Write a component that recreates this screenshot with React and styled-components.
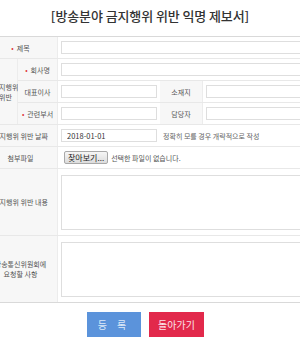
import React from 'react'
import styled, { createGlobalStyle } from 'styled-components'

const Global = createGlobalStyle`
    html, body {
        margin: 0;
        padding: 0;
        background: #ffffff;
    }
`

const Sheet = styled.div`
    width: 300px;
    height: 350px;
    overflow: hidden;
    background: #ffffff;
    font-family: "Noto Sans CJK KR", "Noto Sans", sans-serif;
    color: #444;
`
const Title = styled.h1`
    margin: 0;
    height: 36px;
    padding-top: 8px;
    box-sizing: border-box;
    text-align: center;
    font-size: 13px;
    line-height: 16px;
    font-weight: 500;
    letter-spacing: -0.1px;
    color: #333;
`
const Table = styled.div`
    margin-left: -16px;
    width: 345px;
    border-top: 1px solid #d9d9d9;
    border-bottom: 1px solid #d9d9d9;
`
const Row = styled.div`
    display: grid;
    grid-template-columns: ${(props) => props.cols || '74px 1fr'};
    border-bottom: 1px solid #e8e8e8;
    &:last-child {
        border-bottom: none;
    }
`
const Group = styled.div`
    display: grid;
    grid-template-columns: 34px 1fr;
    border-bottom: 1px solid #e8e8e8;
`
const GroupRows = styled.div`
    display: flex;
    flex-direction: column;
`
const Label = styled.div`
    background: #f7f7f7;
    border-right: 1px solid #ececec;
    padding-left: ${(props) => props.shift || '0'};
    display: flex;
    align-items: center;
    justify-content: center;
    text-align: center;
    font-size: 7px;
    line-height: 10px;
    color: #555;
    white-space: nowrap;
`
const Required = styled.span`
    color: #e0383e;
    margin-right: 3px;
`
const Cell = styled.div`
    padding: ${(props) => (props.tall ? '6px 3px 5px' : '4px 3px')};
    display: flex;
    align-items: center;
    gap: 6px;
    min-width: 0;
`
const Input = styled.input`
    width: ${(props) => props.w || '100%'};
    height: 13px;
    box-sizing: border-box;
    border: 1px solid #dedede;
    padding: 0 5px;
    font-family: inherit;
    font-size: 7.5px;
    color: #333;
    background: #fff;
    outline: none;
`
const TextArea = styled.textarea`
    width: 100%;
    height: 55px;
    box-sizing: border-box;
    border: 1px solid #dedede;
    resize: none;
    outline: none;
`
const Hint = styled.span`
    font-size: 7px;
    color: #666;
    white-space: nowrap;
`
const FileButton = styled.span`
    margin-left: 3px;
    height: 13px;
    padding: 0 3px;
    box-sizing: border-box;
    display: inline-flex;
    align-items: center;
    border: 1px solid #a9a9a9;
    border-radius: 2px;
    background: linear-gradient(#f6f6f6, #dcdcdc);
    font-size: 8px;
    color: #222;
    white-space: nowrap;
`
const FileText = styled.span`
    margin-left: -3px;
    font-size: 7px;
    color: #555;
    white-space: nowrap;
`
const ButtonBar = styled.div`
    display: flex;
    justify-content: center;
    gap: 8px;
    padding: 9px 9px 0 0;
`
const Button = styled.button`
    width: ${(props) => props.w};
    height: 25px;
    border: none;
    background: ${(props) => props.bg};
    color: ${(props) => props.fg};
    font-family: inherit;
    font-size: 10px;
    letter-spacing: ${(props) => props.spacing || '0'};
    cursor: pointer;
`

const App = () => {
    return (
        <Sheet>
            <Global />
            <Title>[방송분야 금지행위 위반 익명 제보서]</Title>
            <Table>
                <Row>
                    <Label><Required>•</Required>제목</Label>
                    <Cell><Input /></Cell>
                </Row>
                <Group>
                    <Label shift="10px">금지행위<br />위반</Label>
                    <GroupRows>
                        <Row cols="40px 1fr">
                            <Label><Required>•</Required>회사명</Label>
                            <Cell><Input /></Cell>
                        </Row>
                        <Row cols="40px 102px 43px 1fr">
                            <Label>대표이사</Label>
                            <Cell><Input /></Cell>
                            <Label>소재지</Label>
                            <Cell><Input /></Cell>
                        </Row>
                        <Row cols="40px 102px 43px 1fr">
                            <Label><Required>•</Required>관련부서</Label>
                            <Cell><Input /></Cell>
                            <Label>담당자</Label>
                            <Cell><Input /></Cell>
                        </Row>
                    </GroupRows>
                </Group>
                <Row>
                    <Label>금지행위 위반 날짜</Label>
                    <Cell>
                        <Input w="96px" defaultValue="2018-01-01" />
                        <Hint>정확히 모를 경우 개략적으로 작성</Hint>
                    </Cell>
                </Row>
                <Row>
                    <Label>첨부파일</Label>
                    <Cell>
                        <FileButton>찾아보기...</FileButton>
                        <FileText>선택한 파일이 없습니다.</FileText>
                    </Cell>
                </Row>
                <Row>
                    <Label>금지행위 위반 내용</Label>
                    <Cell tall><TextArea /></Cell>
                </Row>
                <Row>
                    <Label>방송통신위원회에<br />요청할 사항</Label>
                    <Cell tall><TextArea /></Cell>
                </Row>
            </Table>
            <ButtonBar>
                <Button w="54px" bg="#5b93db" fg="#dde9f8" spacing="4px">등 록</Button>
                <Button w="55px" bg="#e2294b" fg="#fbe3e8">돌아가기</Button>
            </ButtonBar>
        </Sheet>
    )
}

export default App
